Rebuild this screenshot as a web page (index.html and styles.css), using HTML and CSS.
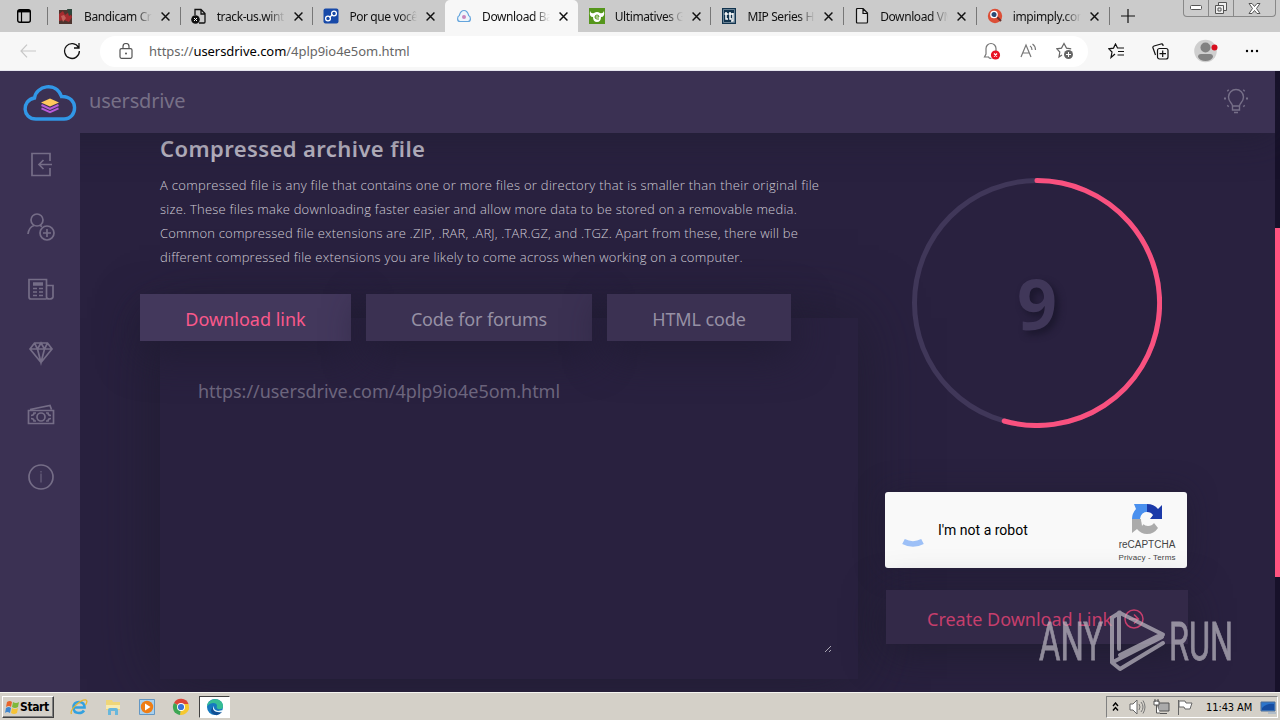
FILE: index.html
```html
<!DOCTYPE html>
<html lang="en">
<head>
    <meta charset="UTF-8">
    <meta name="viewport" content="width=device-width, initial-scale=1.0">
    <title>usersdrive</title>
    <link rel="stylesheet" href="styles.css">
</head>
<body>

    <!-- Browser tabs -->
    <div class="tabs">
        <div class="tab-menu">
            <svg width="14" height="14" viewBox="0 0 14 14"><rect x=".7" y=".7" width="12.6" height="12.6" rx="2" fill="none" stroke="#000" stroke-width="1.4"/><path d="M1 2.2h12" stroke="#000" stroke-width="2.4"/><path d="M4.500 3v10" stroke="#000" stroke-width="1.200"/></svg>
        </div>
        <div class="tab">
            <svg class="fav" viewBox="0 0 16 16"><path d="M1 2h13v14H1z" fill="#4e342e"/><path d="M1 6l4-3 2 4 4-3 3 5-3 5-5-2-5 1z" fill="#a62b2f"/><path d="M9 1h5v5l-3 2z" fill="#2d473c"/><path d="M3 8l3-1 2 3-3 4z" fill="#c2605a"/></svg>
            <span class="title">Bandicam Cra</span>
            <svg class="close" viewBox="0 0 8 8"><path d="M.5.5l7 7M7.5.5l-7 7"/></svg>
        </div>
        <div class="tab">
            <svg class="fav" viewBox="0 0 16 16"><path d="M4 7V1.5h6l4 4V14q0 1-1 1H8M10 1v5h4" fill="none" stroke="#111" stroke-width="1.3"/><circle cx="4.5" cy="11.5" r="4.3" fill="#111"/><path d="M3 10l3 3M6 10l-3 3" stroke="#fff"/></svg>
            <span class="title">track-us.wint</span>
            <svg class="close" viewBox="0 0 8 8"><path d="M.5.5l7 7M7.5.5l-7 7"/></svg>
        </div>
        <div class="tab">
            <svg class="fav" viewBox="0 0 16 16"><rect x=".5" y=".5" width="15" height="15" rx="2" fill="#1749a8"/><g fill="none" stroke="#fff" stroke-width="1.3"><circle cx="5" cy="10.500" r="2.400"/><circle cx="11" cy="5.500" r="2.400"/><path d="M6.500 9.500l3-3"/></g></svg>
            <span class="title">Por que você</span>
            <svg class="close" viewBox="0 0 8 8"><path d="M.5.5l7 7M7.5.5l-7 7"/></svg>
        </div>
        <div class="tab active">
            <svg class="fav" viewBox="0 0 16 16"><path d="M4 13.500C.8 13.500 1 8.500 3.300 7.500 4 5 6 2.500 8 2.500S12 5 12.700 7.500C15 8.500 15.200 13.500 12 13.500z" fill="#eef5fb" stroke="#64a4dc" stroke-width="1.2"/><circle cx="8" cy="9" r="2" fill="#c986bd"/></svg>
            <span class="title">Download Ba</span>
            <svg class="close" viewBox="0 0 8 8"><path d="M.5.5l7 7M7.5.5l-7 7"/></svg>
        </div>
        <div class="tab">
            <svg class="fav" viewBox="0 0 16 16"><path d="M0 0h16v16H0z" fill="#55961c"/><path d="M1 3q1 3 4 2 3-2 6 0 3 1 4-2 1 6-3 6 0 5-4 5t-4-5Q0 9 1 3z" fill="#fff"/><path d="M6 9h4q0-2-2-2t-2 2 2 2h2" fill="none" stroke="#55961c"/></svg>
            <span class="title">Ultimatives Ga</span>
            <svg class="close" viewBox="0 0 8 8"><path d="M.5.5l7 7M7.5.5l-7 7"/></svg>
        </div>
        <div class="tab">
            <svg class="fav" viewBox="0 0 16 16"><path d="M1 0h14v16H1z" fill="#12344e"/><path d="M2.500 1.500h11v13h-11z" fill="none" stroke="#8fa5b4" stroke-width=".7"/><path d="M5 4v7h2M3.500 6h4M9 4v7h2M8 6h4M12 5v8h-2" fill="none" stroke="#fff" stroke-width="1.500"/></svg>
            <span class="title">MIP Series HD</span>
            <svg class="close" viewBox="0 0 8 8"><path d="M.5.5l7 7M7.5.5l-7 7"/></svg>
        </div>
        <div class="tab">
            <svg class="fav" viewBox="0 0 16 16"><path d="M2.500 1.500q0-1 1-1H9l4.500 4.500v9q0 1-1 1h-9q-1 0-1-1zM9 1v4.500h4.500" fill="#ddd" stroke="#111" stroke-width="1.200"/></svg>
            <span class="title">Download VM</span>
            <svg class="close" viewBox="0 0 8 8"><path d="M.5.5l7 7M7.5.5l-7 7"/></svg>
        </div>
        <div class="tab">
            <svg class="fav" viewBox="0 0 16 16"><circle cx="8" cy="8" r="7.200" fill="#dc4f37"/><path d="M10 9l4 4" stroke="#6e2d28" stroke-width="2"/><circle cx="7" cy="6.500" r="3.200" fill="#294a75" stroke="#fff" stroke-width="1.300"/></svg>
            <span class="title">impimply.com</span>
            <svg class="close" viewBox="0 0 8 8"><path d="M.5.5l7 7M7.5.5l-7 7"/></svg>
        </div>
        <div class="new-tab"><svg width="14" height="14" viewBox="0 0 14 14"><path d="M7 0v14M0 7h14" stroke="#111" stroke-width="1.200"/></svg></div>
        <div class="win-buttons">
            <span><svg width="13" height="6" viewBox="0 0 13 6"><rect x=".5" y=".5" width="11" height="4" rx="1" fill="#fff" stroke="#555"/></svg></span>
            <span><svg width="14" height="13" viewBox="0 0 14 13"><g fill="#eee" stroke="#555"><path d="M4.500.5h8v8h-8z"/><path d="M1.500 3.500h8v8h-8z"/><path d="M4 6h3v3H4z"/></g></svg></span>
            <span><svg width="13" height="11" viewBox="0 0 13 11"><path d="M1 .5h3l2.500 3 2.500-3h3L8.500 5.500l3.500 5H9l-2.500-3-2.500 3H1l3.500-5z" fill="#fff" stroke="#555"/></svg></span>
        </div>
    </div>

    <!-- Address bar -->
    <div class="toolbar">
        <svg class="back" width="16" height="14" viewBox="0 0 16 14"><path d="M7 .7L1 7l6 6.300M1 7h15" fill="none" stroke="#c7c7c7" stroke-width="1.200"/></svg>
        <svg class="reload" width="18" height="18" viewBox="0 0 18 18"><path d="M15.500 5.500A7.400 7.400 0 1 0 16.400 9M16 1v5h-5" fill="none" stroke="#111" stroke-width="1.300"/></svg>
        <div class="address">
            <svg width="14" height="16" viewBox="0 0 14 16"><rect x="1" y="5.600" width="12" height="9.700" rx="1.500" fill="none" stroke="#555" stroke-width="1.200"/><path d="M4 5V3.500a3 3 0 0 1 6 0V5" fill="none" stroke="#555" stroke-width="1.200"/><circle cx="7" cy="10.500" r="1" fill="#555"/></svg>
            <span class="url">https://<b>usersdrive.com</b>/4plp9io4e5om.html</span>
            <svg class="bell" width="18" height="18" viewBox="0 0 18 18"><path d="M6 15H1.500L3 12V6.500a5 5 0 0 1 10 0V9M5.500 15q1 2 3 1" fill="none" stroke="#777" stroke-width="1.200"/><circle cx="12.500" cy="13" r="4.600" fill="#e81123"/><path d="M11 11.500l3 3M14 11.500l-3 3" stroke="#fff" stroke-width="1.200"/></svg>
            <svg class="read" width="18" height="16" viewBox="0 0 18 16"><path d="M1 14L6 2l5 12M3 10h6M10 3q2 1 2 4M12.500 1q3 2 3 6" fill="none" stroke="#777" stroke-width="1.200"/></svg>
            <svg class="fav-add" width="18" height="18" viewBox="0 0 18 18"><path d="M6 13l-3 2 .8-5L.8 6.800l4.700-.7L8 1.500l2.500 4.600 4.700.7" fill="none" stroke="#666" stroke-width="1.200"/><circle cx="12.500" cy="12.500" r="4.500" fill="#666"/><path d="M12.500 10v5M10 12.500h5" stroke="#fff"/></svg>
        </div>
        <svg class="favs" width="18" height="16" viewBox="0 0 18 16"><path d="M7 11l-4 3.500L4 9 .8 5.800l4.700-.7L7.500 1l2 4H16M10 8.500h6M9.500 12H16" fill="none" stroke="#111" stroke-width="1.200"/></svg>
        <svg class="coll" width="17" height="17" viewBox="0 0 17 17"><g fill="none" stroke="#111" stroke-width="1.200"><path d="M3.500 12L1 5q-.5-1.500 1-2l7-2q1.500-.4 2 1v1"/><rect x="5.500" y="5.500" width="10.500" height="10.500" rx="2"/><path d="M10.700 7.500v6.500M7.500 10.700H14"/></g></svg>
        <svg class="avatar" width="24" height="24" viewBox="0 0 24 24"><circle cx="11.500" cy="12" r="11.300" fill="#cfcfcf"/><circle cx="11.500" cy="8.500" r="5" fill="#828282"/><path d="M4 18q0-3 3-3h9q3 0 3 3-2 4-7.500 4T4 18z" fill="#828282"/><circle cx="20.500" cy="8.500" r="3" fill="#d80f1f"/></svg>
        <svg class="dots" width="14" height="4" viewBox="0 0 14 4"><circle cx="2" cy="2" r="1.200"/><circle cx="7" cy="2" r="1.200"/><circle cx="12" cy="2" r="1.200"/></svg>
    </div>

    <!-- Web page -->
    <div class="page">
        <div class="site">
            <header class="header">
                <svg class="logo" width="54" height="38" viewBox="0 0 54 38">
                    <path d="M13 35C-1 35-1.500 16 11.500 14 13 2 33 -3 38.500 12.500 56 12 55 35 41 35z" fill="none" stroke="#3197e6" stroke-width="3.400"/>
                    <path d="M27 14.500l9 4-9 4-9-4z" fill="#ffc85c"/>
                    <path d="M18.500 21l8.500 3.800 8.500-3.800M18.500 24.300l8.500 3.800 8.500-3.800" fill="none" stroke="#b65bd8" stroke-width="2"/>
                </svg>
                <span class="brand">usersdrive</span>
                <svg class="bulb" width="24" height="26" viewBox="0 0 24 26"><g fill="none" stroke="#777089" stroke-width="1.400"><path d="M8.500 18c0-3-4-4-4-9a7.500 7.500 0 0 1 15 0c0 5-4 6-4 9zM8.500 18v4h7v-4M10 24.500h4"/><path d="M0 10.500h2M22 10.500h2M3.500 2l1 1M20.500 2l-1 1M3.500 18.500l1-1M20.500 18.500l-1-1" stroke-width="2"/></g></svg>
            </header>
            <div class="body">
                <nav class="sidebar">
                    <a><svg width="28" height="28" viewBox="0 0 28 28"><path d="M23 11V3.500H5v22h18V18M25 14.500H12M16.500 10L12 14.500l4.500 4.500"/></svg></a>
                    <a><svg width="28" height="28" viewBox="0 0 28 28"><ellipse cx="10" cy="7" rx="6" ry="6"/><path d="M1 21q1-7 6-8.500M13 12.500l2 1"/><circle cx="20" cy="20" r="7"/><path d="M20 16v8M16 20h8"/></svg></a>
                    <a><svg width="28" height="28" viewBox="0 0 28 28"><path d="M19.500 24H4q-2 0-2-2V4.500h17.500V22q0 2 3 2t3.500-2V10.500h-6"/><path d="M6 9h10" stroke-width="3.500"/><path d="M6 13.500h4M12 13.500h4M6 17h4M12 17h4M6 20.500h4M12 20.500h4"/></svg></a>
                    <a><svg width="28" height="28" viewBox="0 0 28 28"><path d="M7.500 5h13l4.500 6L14 24.500 3 11zM3 11h22M7.500 5l3 6L14 24.500 17.500 11l3-6M10.500 11L14 5l3.500 6"/></svg></a>
                    <a><svg width="28" height="28" viewBox="0 0 28 28"><path d="M1.500 9.500h25v13h-25zM3 8.500l20-4 1.500 4"/><circle cx="14" cy="16" r="4"/><path d="M4 14.500q3 0 3-2.500h2M24 14.500q-3 0-3-2.500h-2M4 17.500q3 0 3 2.500h2M24 17.500q-3 0-3 2.500h-2"/></svg></a>
                    <a><svg width="28" height="28" viewBox="0 0 28 28"><circle cx="14" cy="14" r="12"/><path d="M14 8v1.500M14 10.500v9" stroke-width="1"/></svg></a>
                </nav>
                <main class="content">
                    <section class="left">
                        <h1>Compressed archive file</h1>
                        <p class="about">
                            <span class="l1">A compressed file is any file that contains one or more files or directory that is smaller than their original file</span>
                            <span class="l2">size. These files make downloading faster easier and allow more data to be stored on a removable media.</span>
                            <span class="l3">Common compressed file extensions are .ZIP, .RAR, .ARJ, .TAR.GZ, and .TGZ. Apart from these, there will be</span>
                            <span class="l4">different compressed file extensions you are likely to come across when working on a computer.</span>
                        </p>
                        <div class="link-tabs">
                            <button class="t1">Download link</button>
                            <button class="t2">Code for forums</button>
                            <button class="t3">HTML code</button>
                        </div>
                        <div class="link-box">
                            <span class="link">https://usersdrive.com/4plp9io4e5om.html</span>
                            <svg class="grip" width="8" height="8" viewBox="0 0 8 8"><path d="M1 7l6-6M5 7l2-2" stroke="#a9a5b2" stroke-width="1"/></svg>
                        </div>
                    </section>
                    <aside class="right">
                        <div class="countdown">
                            <svg width="250" height="250" viewBox="0 0 250 250">
                                <circle cx="125" cy="125" r="122.500" fill="none" stroke="#403759" stroke-width="5"/>
                                <path d="M125 2.500A122.500 122.500 0 1 1 92.200 243" fill="none" stroke="#f9517f" stroke-width="5" stroke-linecap="round"/>
                            </svg>
                            <span class="seconds">9</span>
                        </div>
                        <div class="captcha">
                            <svg class="spin" width="22" height="10" viewBox="0 0 22 10"><path d="M1.500 3.500q9.500 5 19 0" fill="none" stroke="#9dc0f7" stroke-width="5.500"/></svg>
                            <span class="robot">I'm not a robot</span>
                            <div class="recap">
                                <svg width="32" height="32" viewBox="0 0 32 32">
                                    <path d="M1 16A15 15 0 0 1 5 6L3 1h13v8q-6 0-7 7z" fill="#4a90ee"/>
                                    <path d="M16 1q7 0 11 5l4-4v14H18l4-4q-2-3-6-3z" fill="#1c3aa9"/>
                                    <path d="M1 16h9q1 7 7 7 4 0 6-3l4 5q-4 6-11 6-6 0-10-5l-5 4z" fill="#ababab"/>
                                    <path d="M10 16q0-6 6-7l2 5 4-2-3 4 1 4-5-2-4 5z" fill="#f9f9f9"/>
                                </svg>
                                <span class="rc-name">reCAPTCHA</span>
                                <span class="rc-links">Privacy - Terms</span>
                            </div>
                        </div>
                        <div class="create">
                            <span>Create Download Link</span>
                            <svg width="20" height="20" viewBox="0 0 20 20"><g fill="none" stroke="#c63e6c" stroke-width="1.500"><circle cx="10" cy="10" r="9"/><path d="M5 10h9M10 5.500l4.500 4.500-4.500 4.500"/></g></svg>
                        </div>
                    </aside>
                </main>
            </div>
        </div>
        <div class="scrollbar"><div class="thumb"></div></div>
        <svg class="watermark" width="196" height="64" viewBox="0 0 196 64">
            <g fill="#bbb7c1" stroke="#bbb7c1" stroke-width=".8" opacity=".72">
                <text x="2" y="51" font-size="53" textLength="64" lengthAdjust="spacingAndGlyphs">ANY</text>
                <text x="132" y="51" font-size="53" textLength="64" lengthAdjust="spacingAndGlyphs">RUN</text>
            </g>
            <path d="M83 3.500l-8 5v45l8 6.500 43-26M82 40V3.500l44 22M83 46l42-21M76 53l49-25" fill="none" stroke="#bbb7c1" stroke-width="4" stroke-linejoin="round" stroke-linecap="round" opacity=".72"/>
        </svg>
    </div>

    <!-- Taskbar -->
    <div class="taskbar">
        <div class="start">
            <svg width="15" height="16" viewBox="0 0 15 16"><path d="M2 3q3-2 5 0L6 8Q4 6 1 8z" fill="#e8642b"/><path d="M8 3q3 2 6 0l-1 5q-3 2-6 0z" fill="#7fb83b"/><path d="M1 9q3-2 5 0l-1 5q-3-2-5 0z" fill="#3f86cf"/><path d="M7 9q3 2 6 0l-1 5q-3 2-6 0z" fill="#f6c336"/></svg>
            <span>Start</span>
        </div>
        <div class="launch">
            <svg viewBox="0 0 18 18"><path d="M3.500 9.500h11q0-5.500-5.500-5.500t-5.500 5.500 5.500 5.500q3.500 0 5-2.500" fill="none" stroke="#33a1df" stroke-width="2.600"/><path d="M1.500 16C-1 12 11 1 16 2q2 1-.500 5" fill="none" stroke="#e6b52e" stroke-width="1.300"/></svg>
            <svg viewBox="0 0 18 18"><path d="M2 2h6l1 2h7v8H2z" fill="#efd678"/><path d="M2 7h14v4H2z" fill="#f8ebb0"/><path d="M4 17v-5q0-2 2-2h6q2 0 2 2v5h-3v-4H7v4z" fill="#68b7dc"/></svg>
            <svg viewBox="0 0 18 18"><path d="M1.500 1.500h15v15h-15z" fill="#a8d0ee" stroke="#6497c3"/><circle cx="9" cy="9" r="6.200" fill="#ef7d14"/><path d="M7 5.500l5.500 3.500L7 12.500z" fill="#fff"/></svg>
            <svg viewBox="0 0 18 18"><path d="M9 9L2 5a8 8 0 0 1 14.500 1z" fill="#dc4638"/><path d="M9 9h8a8 8 0 0 1-9 8z" fill="#f6c82f"/><path d="M9 9l-1 8A8 8 0 0 1 2 5z" fill="#3da653"/><path d="M9 6h7.500q1.500 5-1.500 8L9 9z" fill="#f6c82f"/><circle cx="9" cy="9" r="4" fill="#fff"/><circle cx="9" cy="9" r="3.100" fill="#3974d8"/></svg>
            <div class="running"><svg viewBox="0 0 18 18"><circle cx="9" cy="9" r="8" fill="#1679bf"/><path d="M1 8C2-1 17-1 17 8q0 4-5 3-2-1-1-3 0-3-4-3-3 0-6 3z" fill="#36bd94"/><path d="M7 9q0 6 9 5-4 5-9 2-4-3 0-7z" fill="#114f94"/><path d="M8 8q-1 4 4 5l5-1-1 2q-7 1-9-3 0-2 1-3z" fill="#e9f7ff"/></svg></div>
        </div>
        <div class="tray">
            <svg class="up" width="7" height="10" viewBox="0 0 7 10"><path d="M1 4l2.500-3L6 4M1 8.500l2.500-3L6 8.500" fill="none" stroke="#000" stroke-width="1.400"/></svg>
            <svg class="vol" width="17" height="16" viewBox="0 0 17 16"><path d="M1 5h3l4-4v14l-4-4H1z" fill="#fff" stroke="#666"/><path d="M10 5q2 3 0 6M12 3q4 5 0 10M14 1.500q4 6.500 0 13" fill="none" stroke="#777"/></svg>
            <svg class="net" width="17" height="16" viewBox="0 0 17 16"><path d="M5 4h11v8H5z" fill="#aaa" stroke="#555"/><path d="M7 14.500h7" stroke="#555"/><path d="M1 2h5v4H1zM2 0v3M5 0v3M3.500 6v8H7" fill="#fff" stroke="#555"/></svg>
            <svg class="flag" width="17" height="15" viewBox="0 0 17 15"><path d="M1.500 0v15M2 1h6l1 2h6l-2 6H8L7 7H2z" fill="#fff" stroke="#666"/></svg>
            <span class="clock">11:43 AM</span>
            <svg class="desk" width="17" height="13" viewBox="0 0 17 13"><path d="M1 1h14v9H1z" fill="#2d75cb" stroke="#4c6d97"/><path d="M2 7Q7 2 14 3v6H2z" fill="#174da1"/><path d="M8 12h8" stroke="#8ca8c8"/></svg>
        </div>
    </div>

</body>
</html>
```

FILE: styles.css
```css
* {
    box-sizing: border-box;
}

body {
    display: flex;
    flex-direction: column;
    width: 1280px;
    height: 720px;
    margin: 0;
    overflow: hidden;
    font-family: "Noto Sans", sans-serif;
    white-space: nowrap;
}

svg {
    display: block;
    flex: none;
}

/* Tabs */
.tabs {
    display: flex;
    height: 32px;
    background: #cbcbcb;
    flex: none;
}

.tab-menu {
    display: flex;
    align-items: center;
    width: 47px;
    padding-left: 17px;
}

.tab {
    display: flex;
    align-items: center;
    width: 132.7px;
    padding-left: 11px;
    background: linear-gradient(#777, #777) 0 7px / 1px 18px no-repeat;
}

.tab.active {
    background: #f7f7f7;
    border-radius: 5px 5px 0 0;
}

.tab.active + .tab {
    background: none;
}

.fav {
    width: 16px;
    height: 16px;
}

.title {
    width: 68px;
    margin-left: 10px;
    overflow: hidden;
    font-size: 12px;
    letter-spacing: -0.4px;
    color: #111;
    -webkit-mask-image: linear-gradient(90deg, #000 75%, transparent);
    mask-image: linear-gradient(90deg, #000 75%, transparent);
}

.close {
    width: 9px;
    height: 9px;
    margin-left: 9px;
    stroke: #111;
    stroke-width: 1.3;
}

.new-tab {
    display: flex;
    align-items: center;
    padding-left: 11px;
    border-left: 1px solid #777;
    height: 18px;
    margin-top: 7px;
}

.win-buttons {
    display: flex;
    width: 93px;
    height: 17px;
    margin-left: auto;
    margin-right: 4px;
    border: 1px solid #888;
    border-top: 0;
    border-radius: 0 0 4px 4px;
}

.win-buttons span {
    display: flex;
    align-items: center;
    justify-content: center;
    width: 25px;
    border-right: 1px solid #888;
}

.win-buttons span:last-child {
    flex: 1;
    border: 0;
}

/* Address bar */
.toolbar {
    display: flex;
    align-items: center;
    height: 39px;
    background: #f7f7f7;
    border-bottom: 1px solid #e5e5ee;
    flex: none;
}

.back {
    margin-left: 20px;
}

.reload {
    margin-left: 27px;
}

.address {
    display: flex;
    align-items: center;
    width: 988px;
    height: 31px;
    margin-left: 19px;
    padding-left: 19px;
    background: #fff;
    border-radius: 16px;
}

.url {
    width: 834px;
    margin-left: 16px;
    font-size: 13px;
    letter-spacing: -0.05px;
    color: #666;
}

.url b {
    font-weight: normal;
    color: #000;
}

.read {
    margin-left: 19px;
}

.fav-add {
    margin-left: 18px;
}

.favs {
    margin-left: 20px;
}

.coll {
    margin-left: 26px;
}

.avatar {
    margin-left: 25px;
}

.dots {
    margin-left: 27px;
}

/* Page */
.page {
    position: relative;
    display: flex;
    height: 621px;
    background: #29213f;
    flex: none;
    overflow: hidden;
}

.site {
    display: flex;
    flex-direction: column;
    width: 1275px;
}

.header {
    display: flex;
    align-items: center;
    height: 62px;
    padding: 0 27px 0 23px;
    background: #3b3153;
    box-shadow: 0 0 40px rgba(29, 29, 46, 0.6);
    z-index: 1;
}

.logo {
    margin-top: 1px;
}

.brand {
    margin: -4px 0 0 12px;
    font-size: 20px;
    letter-spacing: -0.2px;
    color: #777087;
}

.bulb {
    margin: -2px 0 0 auto;
}

.body {
    display: flex;
    flex: 1;
}

.sidebar {
    width: 80px;
    background: #3b3153;
    z-index: 1;
}

.sidebar a {
    display: flex;
    align-items: center;
    justify-content: center;
    height: 62.6px;
    padding-left: 1px;
}

.sidebar svg {
    fill: none;
    stroke: #756d87;
    stroke-width: 1.7;
}

.content {
    display: flex;
    padding-left: 80px;
}

.left {
    width: 698px;
}

h1 {
    height: 40px;
    margin: 0;
    font-size: 22px;
    font-weight: 600;
    line-height: 30px;
    letter-spacing: 0.41px;
    color: #beb9c6;
}

.about {
    margin: 0;
    font-family: "Open Sans", sans-serif;
    font-size: 13px;
    font-weight: 300;
    line-height: 24px;
    color: #cfcbd5;
}

.about span {
    display: block;
}

.l1 {
    letter-spacing: 0.29px;
}

.l2 {
    letter-spacing: 0.23px;
}

.l3 {
    letter-spacing: 0.195px;
}

.l4 {
    letter-spacing: 0.24px;
}

.link-tabs {
    display: flex;
    gap: 15px;
    margin: 25px 0 0 -20px;
    position: relative;
    z-index: 1;
}

.link-tabs button {
    height: 47px;
    padding: 2px 0 0;
    border: 0;
    background: #3b3152;
    box-shadow: 0 14px 40px #211c34;
    font-family: "Noto Sans", sans-serif;
    font-size: 18px;
    color: #9690a4;
}

.link-tabs .t1 {
    width: 211px;
    background: #43385c;
    color: #f9588b;
}

.link-tabs .t2 {
    width: 226px;
    letter-spacing: -0.15px;
}

.link-tabs .t3 {
    width: 184px;
    letter-spacing: -0.1px;
}

.link-box {
    display: flex;
    justify-content: space-between;
    align-items: flex-end;
    height: 361px;
    margin-top: -23px;
    padding: 0 26px 26px 38px;
    background: #29213f;
    box-shadow: 0 0 60px rgba(28, 27, 43, 0.7);
}

.link {
    align-self: flex-start;
    margin-top: 61px;
    font-size: 18px;
    letter-spacing: -0.04px;
    color: #6f687f;
}

.right {
    width: 303px;
    margin-left: 27px;
}

.countdown {
    display: grid;
    width: 250px;
    height: 250px;
    margin: 45px 0 0 27px;
    place-items: center;
}

.countdown > * {
    grid-area: 1 / 1;
}

.seconds {
    font-size: 70px;
    font-weight: 700;
    line-height: 70px;
    color: #403759;
    text-shadow: 4px 4px 7px #1b172d;
}

.captcha {
    display: flex;
    width: 302px;
    height: 76px;
    margin-top: 64px;
    padding-left: 17px;
    background: #f9f9f9;
    border-radius: 3px;
    box-shadow: 0 0 30px rgba(27, 27, 43, 0.4);
}

.spin {
    margin-top: 46px;
}

.robot {
    width: 176px;
    margin-left: 14px;
    font-family: Roboto, sans-serif;
    font-size: 14px;
    line-height: 76px;
    color: #000;
}

.recap {
    display: flex;
    flex-direction: column;
    align-items: center;
    width: 66px;
    padding-top: 11px;
    font-family: "Liberation Sans", sans-serif;
    color: #444;
}

.rc-name {
    margin-top: 3px;
    font-size: 10px;
    line-height: 14px;
}

.rc-links {
    font-size: 8px;
    line-height: 12px;
    letter-spacing: 0.15px;
}

.create {
    position: relative;
    display: flex;
    align-items: center;
    width: 302px;
    height: 54px;
    margin: 22px 0 0 1px;
    padding: 3px 0 0 41px;
    gap: 12px;
    background: #332948;
    box-shadow: 0 8px 40px rgba(28, 27, 43, 0.7);
    font-size: 18px;
    color: #c63e6c;
}

.scrollbar {
    width: 5px;
    padding-top: 157px;
    background: #17112a;
}

.thumb {
    height: 349px;
    background: #ff5380;
}

.watermark {
    position: absolute;
    left: 1037px;
    top: 538px;
    font-family: Roboto, sans-serif;
}

/* Taskbar */
.taskbar {
    display: flex;
    align-items: center;
    height: 28px;
    padding-top: 1px;
    background: #d4d0c8;
    border-top: 1px solid #f5f4f0;
    flex: none;
}

.start {
    display: flex;
    align-items: center;
    width: 52px;
    height: 22px;
    margin-left: 2px;
    padding-left: 2px;
    border: 1px solid;
    border-color: #fff #404040 #404040 #fff;
    box-shadow: inset -1px -1px #808080;
    font-family: "DejaVu Sans Condensed", "DejaVu Sans", sans-serif;
    font-size: 12px;
    font-weight: bold;
    letter-spacing: -0.4px;
}

.launch {
    display: flex;
    align-items: center;
    gap: 16px;
    margin-left: 16px;
}

.launch svg {
    width: 18px;
    height: 18px;
}

.running {
    width: 31px;
    height: 22px;
    margin-left: -7px;
    padding: 1px 6px;
    background: #fff;
    border: 1px solid;
    border-color: #404040 #fff #fff #404040;
}

.tray {
    display: flex;
    align-items: center;
    width: 172px;
    height: 22px;
    margin-left: auto;
    margin-right: 2px;
    padding-left: 5px;
    border: 1px solid;
    border-color: #808080 #fff #fff #808080;
}

.vol {
    margin-left: 10px;
}

.net {
    margin-left: 7px;
}

.flag {
    margin-left: 7px;
}

.clock {
    width: 47px;
    margin-left: 12px;
    font-family: "DejaVu Sans Condensed", "DejaVu Sans", sans-serif;
    font-size: 11px;
    letter-spacing: -0.1px;
}

.desk {
    margin-left: 8px;
}
```
